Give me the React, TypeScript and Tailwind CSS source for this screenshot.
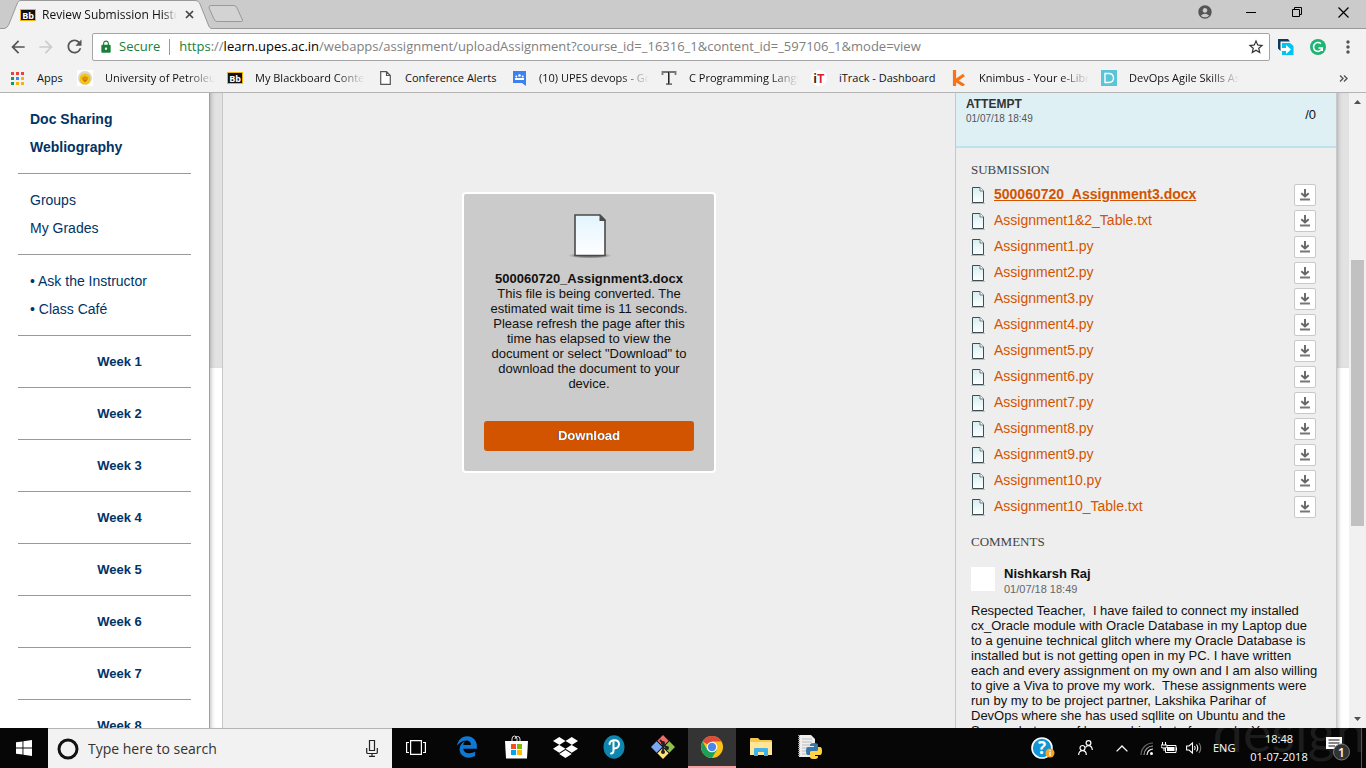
import type { ReactNode } from 'react';
import { FaDropbox, FaEdgeLegacy } from 'react-icons/fa6';
import { MdAccountCircle, MdArrowBack, MdArrowForward, MdRefresh, MdLock, MdStarBorder, MdMoreVert } from 'react-icons/md';

const ui = "font-['Open_Sans','Noto_Sans',sans-serif]";

const files = [
  '500060720_Assignment3.docx',
  'Assignment1&2_Table.txt',
  'Assignment1.py',
  'Assignment2.py',
  'Assignment3.py',
  'Assignment4.py',
  'Assignment5.py',
  'Assignment6.py',
  'Assignment7.py',
  'Assignment8.py',
  'Assignment9.py',
  'Assignment10.py',
  'Assignment10_Table.txt',
];

function BbIcon() {
  return (
    <svg width="16" height="12" viewBox="0 0 16 12" className="shrink-0">
      <rect x="0.5" y="0.5" width="15" height="11" fill="#111" stroke="#eeb211" />
      <text x="8" y="9.5" textAnchor="middle" fontSize="9" fontWeight="700" fontFamily="Open Sans" fill="#fff">Bb</text>
    </svg>
  );
}

function Bookmark({ icon, label, width, fade }: { icon: ReactNode; label: string; width: string; fade?: boolean }) {
  return (
    <a href="#" className="flex items-center gap-3">
      <span className="flex w-4 shrink-0 justify-center">{icon}</span>
      <span className={`${width} overflow-hidden whitespace-nowrap ${fade ? '[mask-image:linear-gradient(to_left,transparent,black_28px)]' : ''}`}>
        {label}
      </span>
    </a>
  );
}

function Browser() {
  return (
    <header className={`shrink-0 bg-[#f2f2f2] text-[11px] text-[#111] ${ui}`}>
      <div className="flex h-[29px] items-stretch border-b border-[#999] bg-[#cbcbcb]">
        <div className="relative z-10 -mb-px flex w-[212px] items-center">
          <svg className="absolute inset-0" width="212" height="29" viewBox="0 0 212 29">
            <path d="M0 28.500H4C7 28 8 26 9 24L17 4C18 1.500 19 .5 21 .5H195C198 .5 199 2 200 4L208 24C209 27 210 28.500 212 28.500V29H0Z" fill="#f2f2f2" />
            <path d="M0 28.500H4C7 28 8 26 9 24L17 4C18 1.500 19 .5 21 .5H195C198 .5 199 2 200 4L208 24C209 27 210 28.500 212 28.500" fill="none" stroke="#999" />
          </svg>
          <div className="relative flex w-full items-center pr-[17px] pl-5">
            <BbIcon />
            <span className="ml-1.5 w-[135px] overflow-hidden text-[12px] whitespace-nowrap [mask-image:linear-gradient(to_left,transparent,black_14px)]">
              Review Submission History
            </span>
            <button aria-label="Close tab" className="ml-2">
              <svg width="9" height="9" viewBox="0 0 9 9"><path d="M1 1L8 8M8 1L1 8" stroke="#444" strokeWidth="1.700" /></svg>
            </button>
          </div>
        </div>
        <button aria-label="New tab" className="-ml-1">
          <svg width="36" height="18" viewBox="0 0 36 18"><path d="M3 .5H26Q28 .5 29 3L34.500 15Q35 16.500 33.500 16.500H9Q7 16.500 6 14L1 3Q.5 .5 3 .5Z" fill="#d3d3d3" stroke="#999" /></svg>
        </button>
        <div className="ml-auto flex items-center pb-1">
          <MdAccountCircle size={16} color="#555" />
          <button aria-label="Minimize" className="ml-[15px] flex w-[46px] justify-center"><span className="h-px w-2.5 bg-black" /></button>
          <button aria-label="Restore" className="flex w-[46px] justify-center">
            <svg width="10" height="10" viewBox="0 0 10 10"><path d="M.5 2.500H7.500V9.500H.5ZM2.500 2.500V.5H9.500V7.500H7.500" fill="none" stroke="#000" /></svg>
          </button>
          <button aria-label="Close" className="flex w-[46px] justify-center">
            <svg width="11" height="11" viewBox="0 0 11 11"><path d="M.5 .5L10.500 10.500M10.500 .5L.5 10.500" stroke="#000" strokeWidth="1.200" /></svg>
          </button>
        </div>
      </div>
      <div className="flex h-[35px] items-center px-2">
        <div className="flex w-[84px] items-center gap-2">
          <button aria-label="Back"><MdArrowBack size={20} color="#555" /></button>
          <button aria-label="Forward"><MdArrowForward size={20} color="#ccc" /></button>
          <button aria-label="Reload"><MdRefresh size={21} color="#555" /></button>
        </div>
        <div className="flex h-7 min-w-0 flex-1 items-center rounded-xs border border-[#a5a5a5] bg-white px-1 text-[13px]">
          <span className="pl-0.5"><MdLock size={14} color="#188038" /></span>
          <span className="ml-1.5 text-[#188038]">Secure</span>
          <span className="mx-[9px] h-4 w-px bg-[#999]" />
          <div className="min-w-0 flex-1 overflow-hidden whitespace-nowrap text-[#808080]">
            <span className="text-[#188038]">https</span>://<span className="text-black">learn.upes.ac.in</span>
            /webapps/assignment/uploadAssignment?course_id=_16316_1&amp;content_id=_597106_1&amp;mode=view
          </div>
          <button aria-label="Bookmark this page"><MdStarBorder size={18} color="#333" /></button>
        </div>
        <div className="ml-2 flex items-center gap-4">
          <svg width="16" height="16" viewBox="0 0 16 16">
            <path d="M0 0H10L12 2.500H2.500V12L0 9.500Z" fill="#0b3c5d" />
            <path d="M4 4H12L15.500 7V16H4Z" fill="#00c3ee" />
            <path d="M3 9H8V6L13 10.500L8 15V12H3Z" fill="#fff" />
          </svg>
          <svg width="16" height="16" viewBox="0 0 16 16">
            <circle cx="8" cy="8" r="8" fill="#1db573" />
            <path d="M11 4.800A4.400 4.400 0 1 0 12.200 9H8.500M12.200 9V12" fill="none" stroke="#fff" strokeWidth="1.600" />
          </svg>
          <button aria-label="Menu" className="-ml-1"><MdMoreVert size={20} color="#555" /></button>
        </div>
      </div>
      <nav aria-label="Bookmarks" className="flex h-[29px] items-center border-b border-[#b4b4b4] pr-[18px] pl-[9px]">
        <Bookmark width="w-[40px]" label="Apps" icon={
          <svg width="13" height="13" viewBox="0 0 13 13">
            {['#ea4335', '#ea4335', '#ea4335', '#0f9d58', '#4285f4', '#f4b400', '#0f9d58', '#f4b400', '#f4b400'].map((c, i) => (
              <rect key={i} x={(i % 3) * 5} y={Math.floor(i / 3) * 5} width="3" height="3" fill={c} />
            ))}
          </svg>
        } />
        <Bookmark fade width="w-[110px]" label="University of Petroleum" icon={
          <svg width="16" height="16" viewBox="0 0 16 16"><rect width="16" height="16" fill="#fff" /><circle cx="8" cy="8" r="7" fill="#d8d8d0" /><circle cx="8" cy="9" r="5.500" fill="#f7c315" /><path d="M6 7V9Q6 11 8 11T10 9V7M8 6V12" fill="none" stroke="#b96a10" /></svg>
        } />
        <span className="w-3" />
        <Bookmark fade width="w-[110px]" label="My Blackboard Content" icon={<BbIcon />} />
        <span className="w-3" />
        <Bookmark width="w-[98px]" label="Conference Alerts" icon={
          <svg width="11" height="14" viewBox="0 0 11 14"><path d="M.7 .7H6.500L10.300 4.500V13.300H.7ZM6.500 .7V4.500H10.300" fill="#fff" stroke="#555" strokeWidth="1.200" /></svg>
        } />
        <span className="w-2" />
        <Bookmark fade width="w-[110px]" label="(10) UPES devops - Google" icon={
          <svg width="13" height="15" viewBox="0 0 13 15"><path d="M0 0H13V15L9 12H0Z" fill="#3b82f0" /><circle cx="6.500" cy="4.500" r="1.300" fill="#fff" /><circle cx="3.300" cy="5.500" r="1" fill="#fff" /><circle cx="9.700" cy="5.500" r="1" fill="#fff" /><path d="M2 9V7H11V9Z" fill="#fff" /></svg>
        } />
        <span className="w-3" />
        <Bookmark fade width="w-[110px]" label="C Programming Language" icon={
          <svg width="16" height="16" viewBox="0 0 16 16"><path d="M1.500 5V2H14.500V5M8 2V14M5 14.200H11" fill="none" stroke="#777" strokeWidth="1.800" /><path d="M7.500 2V14" stroke="#222" strokeWidth="1" /></svg>
        } />
        <span className="w-3" />
        <Bookmark width="w-[104px]" label="iTrack - Dashboard" icon={
          <svg width="16" height="16" viewBox="0 0 16 16"><circle cx="8" cy="8" r="8" fill="#fff" /><text x="2.500" y="12.500" fontSize="12" fontWeight="700" fontFamily="Roboto" fill="#222">i</text><text x="6" y="12.500" fontSize="12" fontWeight="700" fontFamily="Roboto" fill="#d8202c">T</text></svg>
        } />
        <span className="w-2" />
        <Bookmark fade width="w-[110px]" label="Knimbus - Your e-Library" icon={
          <svg width="14" height="16" viewBox="0 0 14 16"><path d="M2.500 0V16M12 5L4 10.500L12 15.500" fill="none" stroke="#f97316" strokeWidth="3.200" /></svg>
        } />
        <span className="w-3" />
        <Bookmark fade width="w-[110px]" label="DevOps Agile Skills Association" icon={
          <svg width="16" height="16" viewBox="0 0 16 16"><rect width="16" height="16" fill="#5bc4d6" /><path d="M4 3.500H8Q12.500 3.500 12.500 8T8 12.500H4Z" fill="none" stroke="#fff" strokeWidth="1.400" /></svg>
        } />
        <button aria-label="More bookmarks" className="ml-auto">
          <svg width="9" height="7" viewBox="0 0 9 7"><path d="M1 .5L4 3.500L1 6.500M5 .5L8 3.500L5 6.500" fill="none" stroke="#555" strokeWidth="1.400" /></svg>
        </button>
      </nav>
    </header>
  );
}

function Sidebar() {
  const group = 'mx-[18px] flex flex-col border-b border-[#999] py-3 pl-3 text-[14px] leading-7';
  return (
    <nav aria-label="Course menu" className="w-[210px] shrink-0 overflow-hidden border-r border-[#5fb4e5] bg-white text-[#003366]">
      <div className={`${group} font-bold`}>
        <a href="#">Doc Sharing</a>
        <a href="#">Webliography</a>
      </div>
      <div className={group}>
        <a href="#">Groups</a>
        <a href="#">My Grades</a>
      </div>
      <div className={group}>
        <a href="#">• Ask the Instructor</a>
        <a href="#">• Class Café</a>
      </div>
      {[1, 2, 3, 4, 5, 6, 7, 8].map((n) => (
        <a key={n} href="#" className="mx-[18px] flex h-[52px] items-center justify-center border-b border-[#999] pl-[30px] text-[13px] font-bold">
          Week {n}
        </a>
      ))}
    </nav>
  );
}

function Gutter() {
  return (
    <div className="flex w-3 shrink-0 flex-col bg-white [box-shadow:inset_4px_0_4px_-3px_#bbb]">
      <div className="h-[275px] bg-[#e2e2e2] [box-shadow:inset_4px_0_4px_-3px_#aaa]" />
    </div>
  );
}

function FileIcon() {
  return (
    <svg width="14" height="17" viewBox="0 0 14 17" className="shrink-0">
      <defs><linearGradient id="sheet" x2="0" y2="1"><stop offset="0" stopColor="#d5eef0" /><stop offset="1" stopColor="#fff" /></linearGradient></defs>
      <path d="M0 16.500H14" stroke="#bbb" />
      <path d="M1.500 .5H9L12.500 4V15.500H1.500Z" fill="url(#sheet)" stroke="#3c4f52" />
      <path d="M9 .5V4H12.500" fill="#fff" stroke="#6b7c7f" />
    </svg>
  );
}

function Card() {
  return (
    <section className="flex w-[254px] flex-col items-center rounded-sm border-2 border-white bg-[#cbcbcb] p-5 text-center text-[13px] leading-[15px] text-[#111]">
      <svg width="46" height="46" viewBox="0 0 46 46">
        <defs>
          <linearGradient id="page" x2="0" y2="1"><stop offset="0" stopColor="#e2f4fd" /><stop offset="1" stopColor="#fff" /></linearGradient>
          <radialGradient id="ground"><stop offset="0.500" stopColor="#777" /><stop offset="1" stopColor="#777" stopOpacity="0" /></radialGradient>
        </defs>
        <ellipse cx="24" cy="41.500" rx="22" ry="3" fill="url(#ground)" />
        <path d="M9 1H34L39 6V41.500H9Z" fill="url(#page)" stroke="#4a4a4a" strokeWidth="1.600" />
        <path d="M33.500 .5V7H40Z" fill="#4a4a4a" />
      </svg>
      <div className="mt-[11px] font-bold">500060720_Assignment3.docx</div>
      <p>
        This file is being converted. The estimated wait time is 11 seconds. Please refresh the page after this time has
        elapsed to view the document or select "Download" to download the document to your device.
      </p>
      <button className="mt-[30px] h-[30px] w-full rounded-[3px] bg-[#d35400] pb-0.5 font-bold text-white [text-shadow:-1px_0_#6b2a00]">Download</button>
    </section>
  );
}

function Submission() {
  return (
    <aside className="w-[382px] shrink-0 overflow-hidden border-x border-[#c8c8c8] bg-[#eee] text-[13px] text-[#111]">
      <div className="flex h-[55px] justify-between border-b-2 border-[#bfe3ec] bg-[#dff0f5] pr-5 pl-2.5">
        <div className="pt-[3px]">
          <h2 className="text-[12px] leading-4 font-bold text-[#333]">ATTEMPT</h2>
          <p className="text-[10px] leading-[14px] text-[#555]">01/07/18 18:49</p>
        </div>
        <span className="pt-3 leading-5">/0</span>
      </div>
      <div className="pr-4 pl-[15px]">
        <h3 className="pt-2.5 pb-px font-['Liberation_Serif',serif] leading-[23px] text-[#444]">SUBMISSION</h3>
        <ul className="pr-1">
          {files.map((f, i) => (
            <li key={f} className="flex h-[26px] items-center">
              <FileIcon />
              <a href="#" className={`ml-[9px] pb-0.5 text-[14px] text-[#d35400] ${i === 0 ? 'font-bold underline' : ''}`}>{f}</a>
              <button aria-label={`Download ${f}`} className="ml-auto flex size-[22px] items-center justify-center rounded-xs border border-[#c8c8c8] bg-white">
                <svg width="10" height="12" viewBox="0 0 10 12"><path d="M5 0V7M1.300 4.300L5 7.500L8.700 4.300" fill="none" stroke="#666" strokeWidth="1.900" /><path d="M0 10.500H10" stroke="#777" strokeWidth="2" /></svg>
              </button>
            </li>
          ))}
        </ul>
        <h3 className="pt-2.5 pb-px font-['Liberation_Serif',serif] leading-[23px] text-[#444]">COMMENTS</h3>
        <div className="mt-3 flex gap-[9px]">
          <div className="mt-px size-6 bg-white" />
          <div>
            <div className="leading-4 font-bold">Nishkarsh Raj</div>
            <div className="text-[11px] leading-[15px] text-[#666]">01/07/18 18:49</div>
          </div>
        </div>
        <p className="mt-1.5 leading-[15px]">
          Respected Teacher,&nbsp; I have failed to connect my installed cx_Oracle module with Oracle Database in my Laptop due to
          a genuine technical glitch where my Oracle Database is installed but is not getting open in my PC. I have written
          each and every assignment on my own and I am also willing to give a Viva to prove my work.&nbsp; These assignments were run
          by my to be project partner, Lakshika Parihar of
          <br />
          DevOps where she has used sqllite on Ubuntu and the Screenshots are of her machine but of my code. You
        </p>
      </div>
    </aside>
  );
}

function Scrollbar() {
  return (
    <div className="flex w-[17px] shrink-0 flex-col items-center bg-[#f1f1f1] py-[7px]">
      <svg width="7" height="4" viewBox="0 0 7 4"><path d="M0 4L3.500 0L7 4Z" fill="#505050" /></svg>
      <div className="mt-[156px] h-[266px] w-[13px] bg-[#c1c1c1]" />
      <svg className="mt-auto" width="7" height="4" viewBox="0 0 7 4"><path d="M0 0L3.500 4L7 0Z" fill="#505050" /></svg>
    </div>
  );
}

function TaskButton({ label, active, children }: { label: string; active?: boolean; children: ReactNode }) {
  return (
    <button aria-label={label} className={`flex h-10 w-12 items-center justify-center border-b-2 ${active ? 'border-[#f4a0a5] bg-[#343434]' : 'border-transparent'}`}>
      {children}
    </button>
  );
}

function Taskbar() {
  return (
    <footer className={`relative flex h-10 shrink-0 items-stretch overflow-hidden bg-[#060606] text-white ${ui}`}>
      <div aria-hidden="true" className="absolute -top-7 right-0 font-['Lato',sans-serif] text-[54px] leading-[64px] text-[#1c1c1c]">design</div>
      <button aria-label="Start" className="relative flex w-12 items-center justify-center">
        <svg width="16" height="16" viewBox="0 0 16 16"><path d="M0 2.300L6.500 1.400V7.500H0ZM7.400 1.200L16 0V7.500H7.400ZM0 8.500H6.500V14.600L0 13.700ZM7.400 8.500H16V16L7.400 14.800Z" fill="#fff" /></svg>
      </button>
      <div className="relative flex w-[344px] items-center border-t border-[#b4b4b4] bg-[#f2f2f2] pr-[14px] pl-[9px]">
        <svg width="22" height="22" viewBox="0 0 22 22"><circle cx="11" cy="11" r="9" fill="none" stroke="#111" strokeWidth="3" /></svg>
        <input aria-label="Search" placeholder="Type here to search" className="ml-[9px] min-w-0 flex-1 bg-transparent text-[14px] text-[#333] outline-none placeholder:text-[#333]" />
        <svg width="12" height="17" viewBox="0 0 12 17"><path d="M3.500 .5H8.500V10.500H3.500ZM.7 8V12.500Q.7 13.500 2 13.500H10Q11.300 13.500 11.300 12.500V8M6 13.500V16M3 16.300H9" fill="none" stroke="#222" strokeWidth="1.200" /></svg>
      </div>
      <div className="relative flex">
        <TaskButton label="Task view">
          <svg width="20" height="15" viewBox="0 0 20 15"><path d="M4.600 .6H15.400V14.400H4.600ZM3 2.500H.6V12.500H3M17 2.500H19.400V12.500H17" fill="none" stroke="#fff" strokeWidth="1.200" /></svg>
        </TaskButton>
        <div className="ml-[3px] flex gap-px">
          <TaskButton label="Microsoft Edge"><FaEdgeLegacy size={22} color="#0f78d4" /></TaskButton>
          <TaskButton label="Store">
            <svg width="24" height="24" viewBox="0 0 24 24">
              <path d="M8 6V4Q8 1 10.500 1T13 4V6M11 4Q11 1.500 13.500 1.500T16 4V6" fill="none" stroke="#ddd" />
              <path d="M1 6H24L23 23.500H2Z" fill="#fff" />
              <path d="M7 9H12V14H7Z" fill="#f25022" /><path d="M13 9H18V14H13Z" fill="#7fba00" /><path d="M7 15H12V20H7Z" fill="#00a4ef" /><path d="M13 15H18V20H13Z" fill="#ffb900" />
            </svg>
          </TaskButton>
          <TaskButton label="Dropbox"><FaDropbox size={25} color="#fff" /></TaskButton>
          <TaskButton label="Pearson">
            <svg width="22" height="24" viewBox="0 0 22 24"><ellipse cx="11" cy="12" rx="10.500" ry="11.800" fill="#0e86ae" /><path d="M10.500 6V15.500Q10.500 18.500 8 18.500M6.500 9Q7 5.300 11.500 5.300Q16 5.300 16 9.300T11 13.500" fill="none" stroke="#fff" strokeWidth="2" strokeLinecap="round" /></svg>
          </TaskButton>
          <TaskButton label="Git Bash">
            <svg width="24" height="24" viewBox="0 0 24 24">
              <g transform="rotate(45 12 12)"><rect x="3.500" y="3.500" width="8" height="8" fill="#f06a6a" /><rect x="3.500" y="12.500" width="8" height="8" fill="#7aa7f5" /><rect x="12.500" y="3.500" width="8" height="8" fill="#8bc34a" /><rect x="12.500" y="12.500" width="8" height="8" fill="#ffe27a" /></g>
              <path d="M9 5L12 8V18M12 9L16 13" fill="none" stroke="#222" strokeWidth="1.800" /><circle cx="12" cy="8" r="2" fill="#222" /><circle cx="16" cy="13" r="2" fill="#222" /><circle cx="12" cy="17" r="2" fill="#222" />
            </svg>
          </TaskButton>
          <TaskButton label="Google Chrome" active>
            <svg width="22" height="22" viewBox="0 0 22 22">
              <circle cx="11" cy="11" r="11" fill="#fbc116" />
              <path d="M11 11L1.500 5.500A11 11 0 0 1 20.500 5.500H11Z" fill="#dd4b3e" />
              <path d="M1.500 5.500A11 11 0 0 0 11 22L15.800 13.800L11 11L6.300 13.800Z" fill="#1da05b" />
              <circle cx="11" cy="11" r="5.300" fill="#fff" /><circle cx="11" cy="11" r="4.200" fill="#4a86ee" />
            </svg>
          </TaskButton>
          <TaskButton label="File Explorer">
            <svg width="22" height="19" viewBox="0 0 22 19"><path d="M0 1Q0 0 1 0H8L10 2H21Q22 2 22 3V17H0Z" fill="#f5c84c" /><path d="M0 4H22V17H0Z" fill="#ffe596" /><path d="M4 18V11Q4 10 5 10H17Q18 10 18 11V18H14V14H8V18Z" fill="#3fb3e8" /></svg>
          </TaskButton>
          <TaskButton label="Python IDLE">
            <svg width="24" height="24" viewBox="0 0 24 24">
              <path d="M1 0H13L17 4V22H1Z" fill="#eee" /><path d="M4 4H14M4 7H14M4 10H14M4 13H14M4 16H14M4 19H14" stroke="#bbb" /><path d="M1 0V22" stroke="#999" strokeWidth="2" strokeDasharray="1 1" />
              <g transform="translate(8 8)">
                <path d="M4 4V2Q4 0 8 0T12 2V6Q12 8 10 8H6Q4 8 4 10V12H2Q0 12 0 8T2 4H8V3H4Z" fill="#3776ab" />
                <path d="M12 12V14Q12 16 8 16T4 14V10Q4 8 6 8H10Q12 8 12 6V4H14Q16 4 16 8T14 12H8V13H12Z" fill="#ffd343" />
              </g>
            </svg>
          </TaskButton>
        </div>
      </div>
      <div className="relative ml-auto flex items-center text-[12px]">
        <svg width="24" height="22" viewBox="0 0 24 22"><circle cx="11" cy="11" r="10" fill="#1295d8" stroke="#fff" strokeWidth="1.600" /><text x="11" y="17" textAnchor="middle" fontSize="17" fontWeight="700" fontFamily="Open Sans" fill="#fff">?</text><circle cx="19" cy="16" r="4.500" fill="#f5a623" /><path d="M19 13V14.200M19 15V19" stroke="#fff" strokeWidth="1.300" /></svg>
        <svg className="ml-[23px]" width="15" height="16" viewBox="0 0 15 16"><g fill="none" stroke="#fff" strokeWidth="1.200"><circle cx="4.500" cy="8" r="2.500" /><path d="M.7 15Q.7 10.700 4.500 10.700T8.300 15" /><circle cx="10.500" cy="3" r="2.400" /><path d="M7.500 7.500Q8.500 5.700 10.500 5.700Q14 5.700 14.300 10" /></g></svg>
        <svg className="ml-[23px]" width="12" height="7" viewBox="0 0 12 7"><path d="M.6 6.400L6 1L11.400 6.400" fill="none" stroke="#fff" strokeWidth="1.300" /></svg>
        <svg className="ml-3" width="13" height="13" viewBox="0 0 13 13"><g fill="none" strokeWidth="1.200"><path d="M1 13A12 12 0 0 1 13 1" stroke="#666" /><path d="M4 13A9 9 0 0 1 13 4" stroke="#999" /><path d="M7 13A6 6 0 0 1 13 7" stroke="#eee" /></g><circle cx="11.500" cy="11.500" r="1.500" fill="#fff" /></svg>
        <svg className="ml-2" width="17" height="12" viewBox="0 0 17 12"><path d="M4.500 3.500H15V10.500H4.500ZM15.500 5.500V8.500" fill="none" stroke="#fff" /><path d="M6 5H13.500V9H6Z" fill="#fff" /><path d="M1.500 0V3M4.500 0V3M0 3H6V5Q6 6 3 6T0 5ZM3 6V9" stroke="#fff" fill="#060606" /></svg>
        <svg className="ml-2" width="17" height="14" viewBox="0 0 17 14"><g fill="none" stroke="#fff" strokeWidth="1.100"><path d="M.6 5V9H3L6.500 12V2L3 5Z" /><path d="M8.500 5Q10 7 8.500 9M10.500 3.500Q13 7 10.500 10.500" /><path d="M13 2Q16.500 7 13 12" stroke="#777" /></g></svg>
        <span className="ml-2.5 w-6 text-[11px]">ENG</span>
        <div className="ml-2 w-[68px] text-center text-[11px] leading-[18px]">
          <div>18:48</div>
          <div>01-07-2018</div>
        </div>
        <button aria-label="Notifications" className="mr-[10px] ml-3">
          <svg width="26" height="26" viewBox="0 0 26 26"><path d="M1 2H17V14H13V18L9 14H1Z" fill="#fff" /><path d="M3.500 5H14.500M3.500 8H14.500M3.500 11H10" stroke="#111" /><circle cx="16.500" cy="17" r="8" fill="#333" stroke="#777" /><text x="16.500" y="21.500" textAnchor="middle" fontSize="12" fontWeight="600" fontFamily="Open Sans" fill="#fff">1</text></svg>
        </button>
        <button aria-label="Show desktop" className="h-10 w-[5px] border-l border-[#555]" />
      </div>
    </footer>
  );
}

export default function App() {
  return (
    <div className="flex h-screen flex-col overflow-hidden font-['Liberation_Sans',Arial,sans-serif]">
      <Browser />
      <div className="flex min-h-0 flex-1">
        <Sidebar />
        <Gutter />
        <main className="flex min-w-0 flex-1 items-start justify-center border-l border-[#c8c8c8] bg-[#eee] pt-[99px]">
          <Card />
        </main>
        <Submission />
        <Gutter />
        <Scrollbar />
      </div>
      <Taskbar />
    </div>
  );
}
